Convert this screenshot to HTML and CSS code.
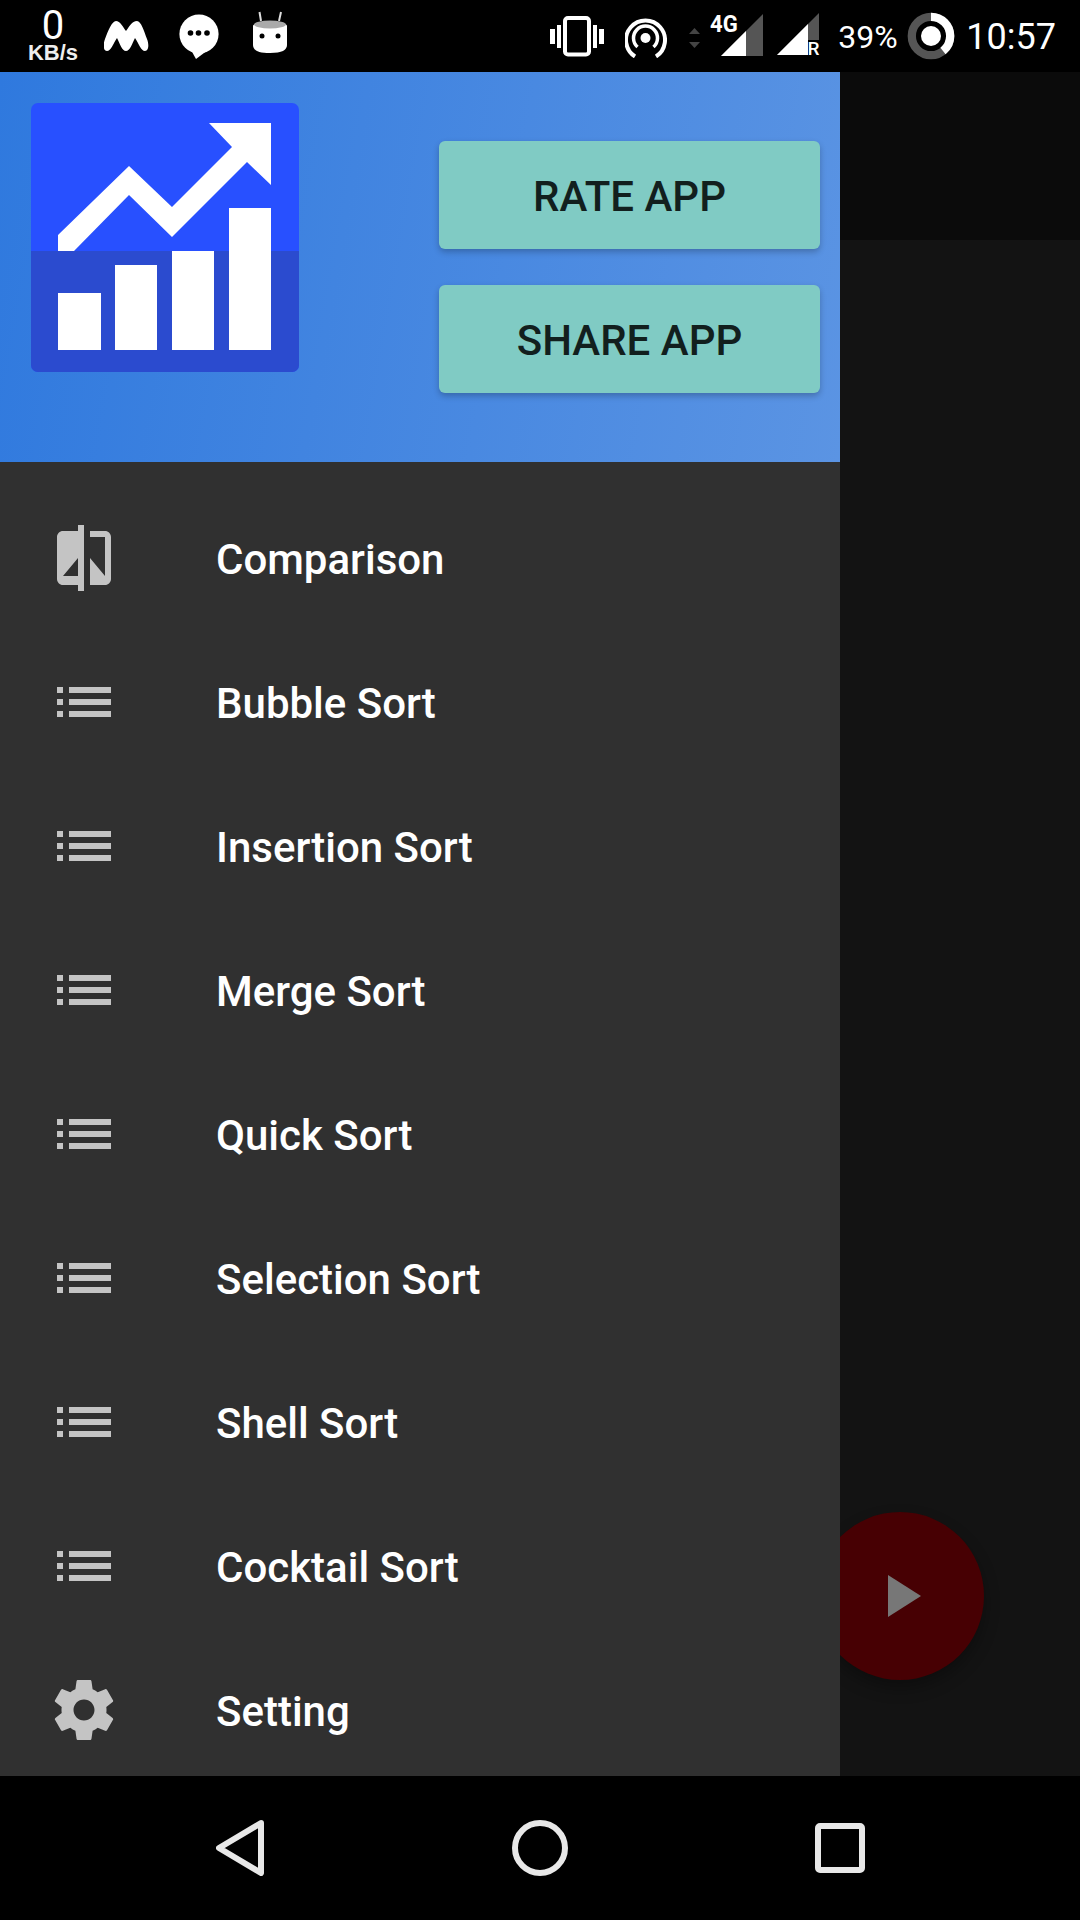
FILE: index.html
```html
<!DOCTYPE html>
<html lang="en">
<head>
<meta charset="utf-8">
<title>Sorting Visualizer</title>
<link rel="stylesheet" href="styles.css">
</head>
<body>
<div class="screen">
  <header class="status">
    <div class="status-left">
      <div class="netspeed"><span class="net-num">0</span><span class="net-unit">KB/s</span></div>
      <svg class="si si-m" viewBox="104 14 45 45"><path d="M107 51C103 51 103 44 105 39C108 31 112 21 116 21C120 21 123 27 126 31C129 27 132 21 137 21C141 21 144 31 147 39C149 44 149 51 145 51C141 51 139 44 135 38C132 44 130 51 126 51C122 51 120 44 117 38C113 44 111 51 107 51Z" fill="#fff"/></svg>
      <svg class="si si-bubble" viewBox="179 14 40 45"><circle cx="199" cy="34" r="19.6" fill="#fff"/><path d="M191 50L196 59L208 50Z" fill="#fff"/><circle cx="190.500" cy="33" r="2.800" fill="#000"/><circle cx="198.500" cy="33" r="2.800" fill="#000"/><circle cx="207" cy="33" r="2.800" fill="#000"/></svg>
      <svg class="si si-mars" viewBox="253 11 35 43"><path d="M261 21L259.500 12M279 21L281 12" stroke="#ddd" stroke-width="2" fill="none"/><path d="M253 26C253 21 287 21 287 26V45C287 50 282 53 270 53C258 53 253 50 253 45Z" fill="#fff"/><ellipse cx="270" cy="24.500" rx="16" ry="4" fill="#aaa"/><circle cx="262" cy="36" r="2.500" fill="#000"/><circle cx="278" cy="36" r="2.500" fill="#000"/></svg>
    </div>
    <div class="status-right">
      <svg class="si si-vib" viewBox="550 14 54 44"><rect x="565" y="18" width="24" height="36.500" rx="3" fill="none" stroke="#fff" stroke-width="4"/><rect x="550" y="29" width="5" height="15" fill="#fff"/><rect x="557" y="25" width="4" height="23" fill="#fff"/><rect x="593" y="25" width="4" height="23" fill="#fff"/><rect x="599" y="29" width="5" height="15" fill="#fff"/></svg>
      <svg class="si si-hot" viewBox="625 14 42 44"><circle cx="645.500" cy="38" r="5" fill="#fff"/><path d="M637.500 47A12 12 0 1 1 653.500 47" fill="none" stroke="#fff" stroke-width="3.500"/><path d="M635 56.500A19.500 19.500 0 1 1 656 56.500" fill="none" stroke="#fff" stroke-width="4"/></svg>
      <svg class="si si-arrows" viewBox="689 26 11 24"><path d="M689 34L694.500 28L700 34Z" fill="#444"/><path d="M689 42H700L694.500 48Z" fill="#444"/></svg>
      <div class="sig sig-4g">
        <svg class="si" viewBox="721 14 42 42"><path d="M721 56L763 14V56Z" fill="#555"/><path d="M721 56L746 31V56Z" fill="#fff"/></svg>
        <span class="tag-4g">4G</span>
      </div>
      <div class="sig sig-r">
        <svg class="si" viewBox="777 13 42 43"><path d="M777 55L819 13V55Z" fill="#555"/><path d="M777 55L808 24V55Z" fill="#fff"/><rect x="808" y="40" width="12" height="16" fill="#000"/></svg>
        <span class="tag-r">R</span>
      </div>
      <span class="pct">39%</span>
      <svg class="si si-ring" viewBox="907 12 48 48"><circle cx="931" cy="36" r="19.200" fill="none" stroke="#555" stroke-width="8.300"/><circle cx="931" cy="36" r="19.200" fill="none" stroke="#fff" stroke-width="8.300" stroke-dasharray="47 74" transform="rotate(-90 931 36)"/><circle cx="931" cy="36" r="10" fill="#fff"/></svg>
      <span class="clock">10:57</span>
    </div>
  </header>

  <main class="main">
    <nav class="drawer">
      <div class="drawer-head">
        <svg class="logo" viewBox="31 103 268 269">
          <rect x="31" y="103" width="268" height="269" rx="7" fill="#2850ff"/>
          <path d="M31 251H299V365a7 7 0 0 1-7 7H38a7 7 0 0 1-7-7Z" fill="#2b4bcf"/>
          <path d="M58 235L129 166L172 207L232 147L209 123H271V185L247 162L172 237L129 195L74 251H58Z" fill="#fff"/>
          <rect x="58" y="293" width="43" height="57" fill="#fff"/>
          <rect x="115" y="265" width="42" height="85" fill="#fff"/>
          <rect x="172" y="251" width="42" height="99" fill="#fff"/>
          <rect x="229" y="208" width="42" height="142" fill="#fff"/>
        </svg>
        <div class="head-actions">
          <button class="btn">RATE APP</button>
          <button class="btn">SHARE APP</button>
        </div>
      </div>
      <ul class="menu">
        <li class="item"><svg class="ico" viewBox="0 0 24 24"><path d="M10 3H5c-1.110 0-2 .9-2 2v14c0 1.100.89 2 2 2h5v2h2V1h-2v2zm0 15H5l5-6v6zm9-15h-5v2h5v13l-5-6v9h5c1.100 0 2-.9 2-2V5c0-1.100-.9-2-2-2z"/></svg><span class="label">Comparison</span></li>
        <li class="item"><svg class="ico" viewBox="0 0 24 24"><path d="M3 13h2v-2H3v2zm0 4h2v-2H3v2zm0-8h2V7H3v2zm4 4h14v-2H7v2zm0 4h14v-2H7v2zM7 7v2h14V7H7z"/></svg><span class="label">Bubble Sort</span></li>
        <li class="item"><svg class="ico" viewBox="0 0 24 24"><path d="M3 13h2v-2H3v2zm0 4h2v-2H3v2zm0-8h2V7H3v2zm4 4h14v-2H7v2zm0 4h14v-2H7v2zM7 7v2h14V7H7z"/></svg><span class="label">Insertion Sort</span></li>
        <li class="item"><svg class="ico" viewBox="0 0 24 24"><path d="M3 13h2v-2H3v2zm0 4h2v-2H3v2zm0-8h2V7H3v2zm4 4h14v-2H7v2zm0 4h14v-2H7v2zM7 7v2h14V7H7z"/></svg><span class="label">Merge Sort</span></li>
        <li class="item"><svg class="ico" viewBox="0 0 24 24"><path d="M3 13h2v-2H3v2zm0 4h2v-2H3v2zm0-8h2V7H3v2zm4 4h14v-2H7v2zm0 4h14v-2H7v2zM7 7v2h14V7H7z"/></svg><span class="label">Quick Sort</span></li>
        <li class="item"><svg class="ico" viewBox="0 0 24 24"><path d="M3 13h2v-2H3v2zm0 4h2v-2H3v2zm0-8h2V7H3v2zm4 4h14v-2H7v2zm0 4h14v-2H7v2zM7 7v2h14V7H7z"/></svg><span class="label">Selection Sort</span></li>
        <li class="item"><svg class="ico" viewBox="0 0 24 24"><path d="M3 13h2v-2H3v2zm0 4h2v-2H3v2zm0-8h2V7H3v2zm4 4h14v-2H7v2zm0 4h14v-2H7v2zM7 7v2h14V7H7z"/></svg><span class="label">Shell Sort</span></li>
        <li class="item"><svg class="ico" viewBox="0 0 24 24"><path d="M3 13h2v-2H3v2zm0 4h2v-2H3v2zm0-8h2V7H3v2zm4 4h14v-2H7v2zm0 4h14v-2H7v2zM7 7v2h14V7H7z"/></svg><span class="label">Cocktail Sort</span></li>
        <li class="item"><svg class="ico" viewBox="0 0 24 24"><path d="M19.430 12.980c.04-.32.07-.64.07-.98s-.03-.66-.07-.98l2.110-1.650c.19-.15.24-.42.12-.64l-2-3.460c-.12-.22-.39-.3-.61-.22l-2.490 1c-.52-.4-1.080-.73-1.690-.98l-.38-2.650C14.460 2.180 14.250 2 14 2h-4c-.25 0-.46.18-.49.42l-.38 2.650c-.61.25-1.170.59-1.690.98l-2.490-1c-.23-.09-.49 0-.61.22l-2 3.460c-.13.22-.07.49.12.64l2.110 1.650c-.04.32-.07.65-.07.98s.03.66.07.98l-2.110 1.650c-.19.15-.24.42-.12.64l2 3.460c.12.22.39.3.61.22l2.490-1c.52.4 1.080.73 1.690.98l.38 2.650c.03.24.24.42.49.42h4c.25 0 .46-.18.49-.42l.38-2.650c.61-.25 1.170-.59 1.690-.98l2.490 1c.23.09.49 0 .61-.22l2-3.460c.12-.22.07-.49-.12-.64l-2.110-1.650zM12 15.500c-1.930 0-3.500-1.570-3.500-3.500s1.570-3.500 3.500-3.500 3.500 1.570 3.500 3.500-1.570 3.500-3.500 3.500z"/></svg><span class="label">Setting</span></li>
      </ul>
    </nav>
    <section class="behind">
      <div class="behind-bar"></div>
    </section>
    <div class="fab"><svg class="fab-ico" viewBox="0 0 33 42"><path d="M0 0L33 21L0 42Z" fill="#777"/></svg></div>
  </main>

  <footer class="navbar">
    <svg class="nav-ico" viewBox="216 1820 48 56"><path d="M261 1823L219 1848L261 1873Z" fill="none" stroke="#e8e8e8" stroke-width="6" stroke-linejoin="round"/></svg>
    <svg class="nav-ico" viewBox="512 1820 56 56"><circle cx="540" cy="1848" r="25" fill="none" stroke="#e8e8e8" stroke-width="6"/></svg>
    <svg class="nav-ico" viewBox="815 1823 50 50"><rect x="818" y="1826" width="44" height="44" rx="2" fill="none" stroke="#e8e8e8" stroke-width="6"/></svg>
  </footer>
</div>
</body>
</html>
```

FILE: styles.css
```css
* { box-sizing: border-box; }
html, body { margin: 0; padding: 0; background: #000; }
.screen {
  width: 1080px;
  height: 1920px;
  display: flex;
  flex-direction: column;
  overflow: hidden;
  font-family: Roboto, "Liberation Sans", sans-serif;
}

/* status bar */
.status {
  height: 72px;
  flex: none;
  background: #000;
  color: #fff;
  display: flex;
  justify-content: space-between;
  align-items: flex-start;
  padding-left: 28px;
  padding-right: 24px;
}
.status-left, .status-right { display: flex; align-items: flex-start; }
.si { display: block; }
.netspeed {
  width: 50px;
  height: 72px;
  display: flex;
  flex-direction: column;
  align-items: center;
}
.net-num { font-size: 40px; font-weight: 400; line-height: 38px; margin-top: 7px; }
.net-unit { font-family: "Liberation Sans", sans-serif; font-size: 22px; font-weight: 700; line-height: 20px; margin-top: -2px; color: #eee; white-space: nowrap; }
.si-m { width: 45px; height: 45px; margin: 14px 0 0 26px; }
.si-bubble { width: 40px; height: 45px; margin: 14px 0 0 30px; }
.si-mars { width: 35px; height: 43px; margin: 11px 0 0 34px; }
.si-vib { width: 54px; height: 44px; margin-top: 14px; }
.si-hot { width: 42px; height: 44px; margin: 14px 0 0 21px; }
.si-arrows { width: 11px; height: 24px; margin: 26px 0 0 22px; }
.sig { position: relative; }
.sig-4g { width: 53px; height: 56px; margin-left: 10px; padding: 14px 0 0 11px; }
.sig-4g .si { width: 42px; height: 42px; }
.tag-4g { position: absolute; left: 0; top: 13px; font-size: 24px; font-weight: 700; line-height: 22px; transform: scaleX(.92); transform-origin: left center; }
.sig-r { width: 42px; height: 56px; margin-left: 14px; padding-top: 13px; }
.sig-r .si { width: 42px; height: 43px; }
.tag-r { position: absolute; right: 0; top: 41px; font-size: 19px; font-weight: 500; line-height: 15px; }
.pct { font-size: 32px; line-height: 36px; margin: 19px 0 0 19px; width: 59px; white-space: nowrap; }
.si-ring { width: 48px; height: 48px; margin: 12px 0 0 10px; }
.clock { font-size: 36px; line-height: 42px; margin: 16px 0 0 11px; white-space: nowrap; }

/* main */
.main { position: relative; flex: 1; min-height: 0; display: flex; }
.drawer {
  position: relative;
  z-index: 1;
  width: 840px;
  flex: none;
  background: #303030;
  overflow: hidden;
}
.drawer-head {
  height: 390px;
  display: flex;
  justify-content: space-between;
  align-items: flex-start;
  padding: 31px 20px 0 31px;
  background: linear-gradient(100deg, #2f79de 0%, #5b94e3 100%);
}
.logo { width: 268px; height: 269px; display: block; }
.head-actions { width: 381px; margin-top: 38px; display: flex; flex-direction: column; gap: 36px; }
.btn {
  height: 108px;
  border: 0;
  border-radius: 6px;
  background: #80cbc4;
  color: #121f1e;
  font-family: Roboto, sans-serif;
  font-size: 42px;
  font-weight: 500;
  padding: 2px 0 0;
  box-shadow: 0 3px 6px rgba(0, 0, 0, .24);
}
.menu { list-style: none; margin: 0; padding: 24px 0 0; }
.item {
  height: 144px;
  display: flex;
  align-items: center;
  gap: 96px;
  padding-left: 48px;
  color: #fff;
  font-size: 42px;
  font-weight: 500;
  white-space: nowrap;
}
.label { margin-top: 2px; }
.ico { width: 72px; height: 72px; flex: none; fill: #c4c4c4; }

/* dimmed content behind the drawer */
.behind { flex: 1; background: #131313; }
.behind-bar { height: 168px; background: #0b0b0b; }
.fab {
  position: absolute;
  right: 96px;
  bottom: 96px;
  width: 168px;
  height: 168px;
  border-radius: 50%;
  background: #470003;
  box-shadow: 0 8px 16px rgba(0, 0, 0, .3);
  display: flex;
  align-items: center;
  justify-content: center;
}
.fab-ico { width: 33px; height: 42px; margin-left: 9px; }

/* navigation bar */
.navbar {
  height: 144px;
  flex: none;
  background: #000;
  padding: 0 90px;
  display: grid;
  grid-template-columns: repeat(3, 1fr);
  align-items: center;
  justify-items: center;
}
.nav-ico { display: block; }
.nav-ico:nth-child(1) { width: 48px; height: 56px; }
.nav-ico:nth-child(2) { width: 56px; height: 56px; }
.nav-ico:nth-child(3) { width: 50px; height: 50px; }
```
